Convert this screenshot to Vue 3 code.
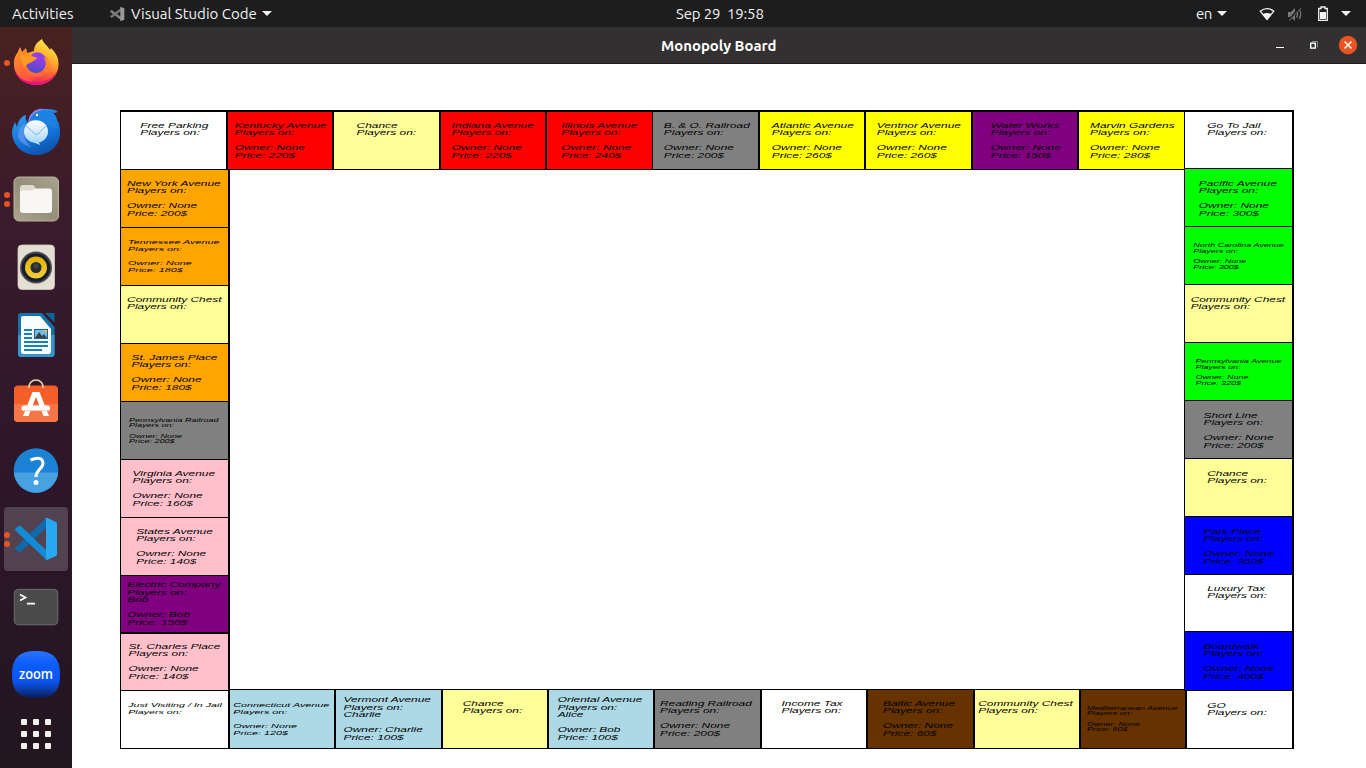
<script setup>
const C = {
  white: '#ffffff', red: '#ff0000', chance: '#ffff99', gray: '#808080', yellow: '#ffff00',
  purple: '#800080', orange: '#ffa500', green: '#00ff00', pink: '#ffc0cb', blue: '#0000ff',
  light: '#add8e6', brown: '#663300'
}

// name, colour, size along the row (border included), leading border, details
const t = (name, color, size, edge, price, opt = {}) => ({
  name, bg: C[color], size, edge, fs: opt.fs || 11.9, dx: opt.dx || 0,
  lines: [
    'Players on:',
    ...(opt.on ? [opt.on] : []),
    ' ',
    price ? `Owner: ${opt.owner || 'None'}` : ' ',
    price ? `Price: ${price}$` : ' '
  ]
})
const shift = (list, dx) => list.map(s => ({ ...s, dx: s.dx + dx }))

const topRow = shift([
  t('Free Parking', 'white', 106, 1, 0),
  t('Kentucky Avenue', 'red', 106, 2, 220),
  t('Chance', 'chance', 107, 2, 0, { dx: -1 }),
  t('Indiana Avenue', 'red', 106, 2, 220, { dx: -1 }),
  t('Illinois Avenue', 'red', 107, 2, 240, { dx: -1 }),
  t('B. & O. Railroad', 'gray', 106, 1, 200, { dx: 0.5 }),
  t('Atlantic Avenue', 'yellow', 106, 2, 260),
  t('Ventnor Avenue', 'yellow', 107, 2, 260, { dx: -0.5 }),
  t('Water Works', 'purple', 106, 2, 150),
  t('Marvin Gardens', 'yellow', 107, 2, 280)
], 0.8)
const leftCol = shift([
  t('New York Avenue', 'orange', 58, 1, 200),
  t('Tennessee Avenue', 'orange', 58, 1, 180, { fs: 10.8 }),
  t('Community Chest', 'chance', 58, 1, 0, { dx: 0.5 }),
  t('St. James Place', 'orange', 58, 1, 180, { dx: 0.7 }),
  t('Pennsylvania Railroad', 'gray', 58, 1, 200, { fs: 9 }),
  t('Virginia Avenue', 'pink', 58, 1, 160),
  t('States Avenue', 'pink', 58, 1, 140, { dx: 0.7 }),
  t('Electric Company', 'purple', 58, 2, 150, { on: 'Bob', owner: 'Bob' }),
  t('St. Charles Place', 'pink', 57, 1, 140, { dx: 0.7 }),
  t('Just Visiting / In Jail', 'white', 58, 1, 0, { fs: 10.7, dx: 1.2 })
], -0.7)
const bottomRow = [
  t('Connecticut Avenue', 'light', 104, 0, 120, { fs: 10.8, dx: -0.7 }),
  t('Vermont Avenue', 'light', 107, 2, 100, { on: 'Charlie', owner: 'Charlie', dx: -1.3 }),
  t('Chance', 'chance', 106, 2, 0, { dx: -2.5 }),
  t('Oriental Avenue', 'light', 106, 2, 100, { on: 'Alice', owner: 'Bob', dx: -1 }),
  t('Reading Railroad', 'gray', 107, 2, 200, { dx: -1.6 }),
  t('Income Tax', 'white', 106, 2, 0, { dx: -2 }),
  t('Baltic Avenue', 'brown', 107, 2, 60, { dx: -1.5 }),
  t('Community Chest', 'chance', 106, 2, 0, { dx: -1.5 }),
  t('Mediterranean Avenue', 'brown', 106, 2, 60, { fs: 9, dx: -0.8 })
]
const rightCol = [
  t('Go To Jail', 'white', 59, 1, 0, { dx: -1.5 }),
  t('Pacific Avenue', 'green', 58, 1, 300, { dx: -0.7 }),
  t('North Carolina Avenue', 'green', 58, 1, 300, { fs: 9 }),
  t('Community Chest', 'chance', 58, 1, 0, { dx: -0.6 }),
  t('Pennsylvania Avenue', 'green', 58, 1, 320, { fs: 9 }),
  t('Short Line', 'gray', 58, 1, 200),
  t('Chance', 'chance', 58, 1, 0, { dx: -1.5 }),
  t('Park Place', 'blue', 58, 1, 350),
  t('Luxury Tax', 'white', 57, 1, 0, { dx: -1.5 }),
  t('Boardwalk', 'blue', 59, 1, 400),
  t('GO', 'white', 58, 1, 0, { dx: -2.5 })
]
const rowStyle = s => ({ background: s.bg, width: s.size + 'px', borderLeftWidth: s.edge + 'px' })
const colStyle = s => ({ background: s.bg, height: s.size + 'px', borderBottomWidth: s.edge + 'px' })
const textStyle = s => ({
  fontSize: s.fs + 'px',
  lineHeight: (s.fs > 11 ? 14 : s.fs > 10 ? 13 : 10) + 'px',
  marginLeft: s.dx * 2 + 'px'
})
</script>

<template>
  <div class="desktop">
    <header class="panel">
      <span class="activities">Activities</span>
      <svg class="app-mark" width="16" height="16" viewBox="0 0 48 48">
        <path d="M4 15l4-3 29 22v9L4 18z" fill="#888" /><path d="M4 33l4 3 29-22V5L4 30z" fill="#777" /><path d="M34 2l12 5v34l-12 5z" fill="#999" />
      </svg>
      <span class="app-name">Visual Studio Code</span>
      <i class="caret c1"></i>
      <span class="clock">Sep 29&nbsp; 19:58</span>
      <span class="lang">en</span>
      <i class="caret c2"></i>
      <svg class="tray" width="50" height="20" viewBox="1256 3 50 20">
        <path d="M1260.200 10.200q6.800-5 13.600 0l-6.800 8.300z" fill="none" stroke="#f2f2f2" stroke-width="1.300" stroke-linejoin="round" />
        <path d="M1262.800 13q4.200-2 8.400 0l-4.200 5.500z" fill="#f2f2f2" />
        <g fill="none" stroke="#777"><path d="M1288 11h3l4-4v13l-4-4h-3z" fill="#777" stroke="none" /><path d="M1296.500 10q2 3 0 6.500M1299 8q3.500 5 0 10" stroke-width="1.300" /><path d="M1288.500 19.500l12-13" stroke="#1d1d1d" stroke-width="2.400" /><path d="M1289.500 19.500l11.500-12.500" /></g>
      </svg>
      <svg class="battery" width="12" height="16" viewBox="0 0 12 16"><path d="M1.700 2.500H4V1h4v1.500h2.300v11.800H1.700z" fill="none" stroke="#f2f2f2" stroke-width="1.300" /><path d="M3 6h6v7H3z" fill="#f2f2f2" /></svg>
      <i class="caret c3"></i>
    </header>

    <div class="below">
      <nav class="dock">
        <div class="slot"><i class="dots one"><b></b></i>
          <svg width="48" height="48" viewBox="0 0 48 48">
            <defs>
              <linearGradient id="ff" x1=".8" y1="0" x2=".3" y2="1"><stop offset="0" stop-color="#fff44f" /><stop offset=".35" stop-color="#ffb02e" /><stop offset=".65" stop-color="#ff5a36" /><stop offset="1" stop-color="#e5127d" /></linearGradient>
              <linearGradient id="ffp" x1=".6" y1="0" x2=".4" y2="1"><stop offset="0" stop-color="#a63bf5" /><stop offset="1" stop-color="#4c4bc0" /></linearGradient>
              <linearGradient id="ffo" x1="0" y1="0" x2=".7" y2="1"><stop offset="0" stop-color="#ffa31f" /><stop offset="1" stop-color="#ff3f4c" /></linearGradient>
            </defs>
            <path d="M30 0c1 4 6 7 8 11l1-2c5 5 8 10 7.500 17C46 38 36 46 24.500 46S2 38 2 25c0-6 2-9 4-12l2-4 2 5 4-4 1 4 7-2c0-5 3-9 8-12z" fill="url(#ff)" />
            <path d="M2 25c0-6 2-9 4-12l2-5 2 5 4-4 1 5 9 4 5 13 4 3-14 9C8 42 2 34 2 25z" fill="url(#ffo)" />
            <path d="M3 32c4 8 12 11 21 11 9 0 17-4 21-11-3 9-11 14-21 14S5 41 3 32z" fill="#e5127d" opacity=".75" />
            <path d="M12 26c1 8 6 12 13 12s13-5 13-12c0-4-2-8-5-10l-4 3-12 4z" fill="#ff7f2e" opacity=".55" />
            <circle cx="24" cy="24.500" r="9.700" fill="url(#ffp)" />
            <path d="M20 15c6-3 12-1 14 5-3-3-7-3-9-2l-2-1z" fill="#8d3ff0" />
            <path d="M8 17l8-3c3 0 4 5 8 4 1 1 1 2-1 3l-5 3c-3 1-5 2-6 5-1-4-3-7-4-12z" fill="#ff9b24" />
          </svg></div>
        <div class="slot"><svg width="48" height="48" viewBox="0 0 48 48">
          <defs><linearGradient id="tb" x1=".3" y1="0" x2=".7" y2="1"><stop offset="0" stop-color="#2f9df4" /><stop offset=".6" stop-color="#1373d9" /><stop offset="1" stop-color="#0d4fa5" /></linearGradient><linearGradient id="tbe" x1="0" y1="0" x2="0" y2="1"><stop offset="0" stop-color="#fff" /><stop offset="1" stop-color="#a8d8fb" /></linearGradient></defs>
          <path d="M16 16C17 6 24 2 32 2c5 0 11 0 14 3l-5 1c2 2 4 4 4 7 3 5 3 9 3 13 0 12-10 22-23 22C10 48 1 38 0 26c0-5 2-8 3-11l2 5c1-6 4-11 9-12-1 3 0 6 2 8z" fill="url(#tb)" />
          <path d="M16 16C17 6 24 1 32 2c-6 2-6 7-8 11-2 0-5 1-8 3z" fill="#9b82ee" />
          <path d="M17 14c2-6 7-11 15-11l13 2-5 2c4 6 3 11 6 15l-15-6c-3-3-8-4-14-2z" fill="#1c82e1" />
          <path d="M6 28c0-5 3-9 7-12-2 11-1 18 6 24-7-2-13-6-13-12z" fill="#6a99ee" opacity=".7" />
          <ellipse cx="24" cy="24.500" rx="12" ry="11.300" fill="url(#tbe)" /><path d="M18 34l10 4-2-5z" fill="#a8d8fb" />
          <path d="M14 19l9 8q1.500 1 3 0l8-8" fill="none" stroke="#83b5dc" stroke-width="1" /><circle cx="25" cy="8" r="1.200" fill="#fff" />
        </svg></div>
        <div class="slot"><i class="dots"><b></b><b></b></i><svg width="48" height="48" viewBox="0 0 48 48">
          <defs><linearGradient id="fi" x1="0" y1="1" x2="1" y2="0"><stop offset="0" stop-color="#aba48f" /><stop offset=".5" stop-color="#958e79" /><stop offset="1" stop-color="#aaa48f" /></linearGradient></defs>
          <rect x="2" y="2" width="44.500" height="44" rx="5" fill="url(#fi)" stroke="#b8b19e" /><path d="M8 24V13q0-3 3-3h9q2 0 3 2l2 3-3 2z" fill="#dedace" /><path d="M8 17q0-1.500 2-1.500h8q2 0 4-1t3-1h12q3 0 3 3V35q0 3-3 3H11q-3 0-3-3z" fill="#f8f7f5" />
        </svg></div>
        <div class="slot"><svg width="48" height="48" viewBox="0 0 48 48">
          <defs><linearGradient id="rb" x1="0" y1="0" x2="0" y2="1"><stop offset="0" stop-color="#dfae06" /><stop offset="1" stop-color="#f3cf3b" /></linearGradient></defs>
          <rect x="6" y="2" width="36.500" height="44.500" rx="4" fill="#e4dfd3" stroke="#d2ccbf" stroke-width=".8" /><circle cx="24" cy="24.500" r="16" fill="#4c4c54" /><circle cx="24" cy="24.500" r="14.300" fill="#191c29" /><circle cx="24" cy="24.500" r="11" fill="url(#rb)" /><circle cx="24" cy="24.500" r="5.500" fill="#282b2d" /><circle cx="24" cy="23" r="2.500" fill="#424343" />
        </svg></div>
        <div class="slot"><svg width="48" height="48" viewBox="0 0 48 48">
          <path d="M9 2h21l12.500 14v27q0 3-3 3H9q-3 0-3-3V5q0-3 3-3z" fill="#1473a9" /><path d="M6 24h36.500v19q0 3-3 3H9q-3 0-3-3z" fill="#3596ce" /><path d="M33 2h9.500v9.500z" fill="#0b659a" />
          <path d="M11 5h17l11 13v22q0 3-3 3H12q-3 0-3-3V7q0-2 2-2z" fill="#f9fbfc" />
          <path d="M12 19h8M12 23h8M12 27h8M12 31h24M12 35h24M12 39h18" stroke="#1780bb" stroke-width="2" /><rect x="22.500" y="18.500" width="13" height="9" fill="#77bde9" stroke="#0e6299" stroke-width="1" /><path d="M23 27l4-6 3 4 2-2 3 4z" fill="#3b4145" /><path d="M32 19h3v3z" fill="#ffc91e" />
        </svg></div>
        <div class="slot"><svg width="48" height="48" viewBox="0 0 48 48">
          <rect x="2" y="6.500" width="44" height="36.500" rx="4" fill="#f45f29" /><path d="M2 25h44v14q0 4-4 4H6q-4 0-4-4z" fill="#f57747" /><path d="M17 9V8C17 4 20 1 24 1s7 3 7 7v1" fill="none" stroke="#f3d3a8" stroke-width="1.700" />
          <path d="M20.500 13h7L37 37h-5.500L24 18l-7.500 19H11z" fill="#fff" /><rect x="9.500" y="26.500" width="28.500" height="5.500" rx="2.700" fill="#fff" /><path d="M12 31.500h24" stroke="#f3b197" stroke-width=".7" />
        </svg></div>
        <div class="slot"><svg width="48" height="48" viewBox="0 0 48 48">
          <circle cx="24" cy="23.500" r="22.300" fill="#1b82d5" /><path d="M1.800 25.500h44.400a22.300 22.300 0 0 1-44.400 0z" fill="#48a2e2" /><path d="M18.500 13q12-4.500 12.500 3c0 6.500-7 6-7 14" fill="none" stroke="#fff" stroke-width="3" /><circle cx="24" cy="35.500" r="2.500" fill="#fff" />
        </svg></div>
        <div class="slot active"><i class="dots"><b></b><b></b></i><svg width="48" height="48" viewBox="0 0 48 48">
          <path d="M3.500 32.500q-1 1 0 2l3.200 2.500q1 1 2 0L34 13V3z" fill="#1268a8" /><path d="M3.500 15.500q-1-1 0-2l3.200-2.500q1-1 2 0L34 35v9.500z" fill="#138bd7" /><path d="M33 3.500l2-.8 9 4.200q1 .6 1 2v30q0 1.400-1 2l-9 4.200-2-.8q1 .2 1-1.500v-37q0-1.700-1-2.300z" fill="#29a8f2" />
        </svg></div>
        <div class="slot"><svg width="48" height="48" viewBox="0 0 48 48">
          <rect x="2.300" y="6.300" width="43.500" height="35.500" rx="4" fill="#4b4b4b" stroke="#6d6d6d" /><path d="M8 11.500l5.500 3-5.500 3M15 20.700h8" fill="none" stroke="#fff" stroke-width="1.700" />
        </svg></div>
        <div class="slot"><svg width="48" height="48" viewBox="0 0 48 48">
          <defs><linearGradient id="zm" x1="0" y1="0" x2="0" y2="1"><stop offset="0" stop-color="#2b73ff" /><stop offset=".3" stop-color="#0b5cff" /><stop offset=".65" stop-color="#0b56ef" /><stop offset="1" stop-color="#0a1d57" /></linearGradient></defs>
          <path d="M24 0C41 0 48 7 48 24S41 47 24 47 0 41 0 24 7 0 24 0z" fill="url(#zm)" /><text class="zoom" x="7" y="28" textLength="34" lengthAdjust="spacingAndGlyphs">zoom</text>
        </svg></div>
        <div class="apps"><i v-for="n in 9" :key="n"></i></div>
      </nav>

      <main class="window">
        <div class="titlebar">
          <span class="title">Monopoly Board</span>
          <svg class="controls" width="90" height="36" viewBox="1270 27 90 36">
            <path d="M1276 47.500h8" stroke="#fff" stroke-width="1" /><path d="M1312 41.500h5.500v6" fill="none" stroke="#888" /><rect x="1310.700" y="43.200" width="4.600" height="4.900" fill="#333031" stroke="#fff" stroke-width="1.400" />
            <circle cx="1348" cy="45" r="9.200" fill="#e95420" /><path d="M1344.500 41.500l7 7M1351.500 41.500l-7 7" stroke="#fff" stroke-width="1.500" />
          </svg>
        </div>
        <div class="canvas">
          <div class="board">
            <div class="main">
              <div class="row top">
                <div v-for="s in topRow" :key="s.name" class="tile" :style="rowStyle(s)">
                  <div class="label" :style="textStyle(s)"><div>{{ s.name }}</div><div v-for="(l, i) in s.lines" :key="i">{{ l }}</div></div>
                </div>
              </div>
              <div class="body">
                <div class="col left">
                  <div v-for="s in leftCol" :key="s.name" class="tile" :style="colStyle(s)">
                    <div class="label" :style="textStyle(s)"><div>{{ s.name }}</div><div v-for="(l, i) in s.lines" :key="i">{{ l }}</div></div>
                  </div>
                </div>
                <div class="row bottom">
                  <div v-for="s in bottomRow" :key="s.name" class="tile" :style="rowStyle(s)">
                    <div class="label" :style="textStyle(s)"><div>{{ s.name }}</div><div v-for="(l, i) in s.lines" :key="i">{{ l }}</div></div>
                  </div>
                </div>
              </div>
            </div>
            <div class="col right">
              <div v-for="s in rightCol" :key="s.name" class="tile" :style="colStyle(s)">
                <div class="label" :style="textStyle(s)"><div>{{ s.name }}</div><div v-for="(l, i) in s.lines" :key="i">{{ l }}</div></div>
              </div>
            </div>
          </div>
        </div>
      </main>
    </div>
  </div>
</template>

<style>
body { margin: 0; overflow: hidden; }
</style>

<style scoped>
.desktop { width: 1366px; height: 768px; background: #fff; overflow: hidden; font-family: Ubuntu, "Noto Sans", sans-serif; }
.desktop * { box-sizing: border-box; }
.panel { height: 27px; background: #1d1d1d; color: #f2f2f2; display: flex; align-items: center; font-size: 15px; line-height: 27px; white-space: nowrap; }
.panel > * { flex: none; }
.activities { width: 97px; padding-left: 12px; }
.app-mark { margin-left: 12px; }
.app-name { margin-left: 6px; width: 127px; }
.caret { width: 0; height: 0; border: 5px solid transparent; border-top-color: #f2f2f2; border-bottom: 0; }
.c1 { margin-left: 4px; }
.clock { margin-left: 404px; width: 88px; letter-spacing: -.15px; }
.lang { margin-left: 432px; width: 17px; letter-spacing: -.5px; }
.c2 { margin-left: 4px; }
.tray { margin-left: 29px; }
.battery { margin-left: 11px; }
.c3 { margin-left: 12px; }
.below { display: flex; height: 741px; }
.dock { width: 72px; flex: none; padding-top: 4px; background: linear-gradient(#492120, #391b2c 27%, #2d162a 62%, #22161f); }
.slot { height: 64px; margin: 0 4px 4px; border-radius: 4px; display: flex; align-items: center; justify-content: center; position: relative; }
.active { background: #52414f; }
.slot svg { display: block; }
.dots { position: absolute; left: 0; top: 0; height: 64px; display: flex; flex-direction: column; justify-content: center; gap: 3px; }
.dots b { width: 6px; height: 6px; border-radius: 50%; background: #e95420; }
.zoom { font: 600 14px "Open Sans", sans-serif; fill: #fff; }
.apps { display: grid; grid-template-columns: repeat(3, 6px); gap: 6px; margin: 12px 0 0 21px; }
.apps i { width: 6px; height: 6px; border-radius: 1px; background: #f1f1ed; }
.window { width: 1294px; flex: none; }
.titlebar { height: 37px; background: #333031; border-bottom: 1px solid #211e1f; display: flex; align-items: center; color: #fff; }
.title { margin-left: 589px; width: 120px; padding-top: 1px; font-size: 14.9px; font-weight: 700; line-height: 35px; white-space: nowrap; }
.controls { margin-left: 489px; flex: none; }
.canvas { padding: 46px 0 0 48px; height: 704px; background: #fff; }
.board { display: flex; width: 1174px; height: 639px; color: #000; }
.main { width: 1064px; flex: none; }
.row { display: flex; }
.tile { border: 0 solid #000; display: flex; align-items: center; justify-content: center; flex: none; }
.top .tile { height: 60px; border-top-width: 2px; border-bottom-width: 1px; }
.body { display: flex; align-items: flex-end; height: 579px; }
.col { width: 110px; flex: none; }
.left .tile { border-left-width: 1px; border-right-width: 2px; }
.right .tile { border-left-width: 1px; border-right-width: 2px; }
.right .tile:first-child { border-top-width: 2px; }
.right .tile:last-child { border-left-width: 2px; margin-left: 1px; }
.bottom .tile { height: 60px; border-top-width: 1px; border-bottom-width: 1px; }
.label { font-family: "Liberation Sans", Arial, sans-serif; font-style: italic; white-space: pre; transform: translateY(-.2px) scaleY(.535); flex: none; }
.right .label { transform: translateY(.5px) scaleY(.535); }
</style>
